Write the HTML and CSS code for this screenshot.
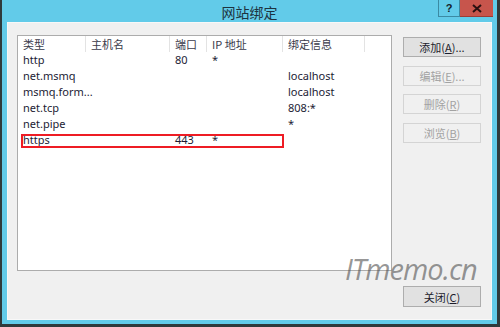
FILE: index.html
```html
<!DOCTYPE html>
<html lang="zh-CN">
<head>
  <meta charset="UTF-8">
  <title>网站绑定</title>
  <link rel="stylesheet" href="styles.css">
</head>
<body>
  <div class="window">
    <div class="titlebar">
      <span class="title">网站绑定</span>
      <div class="caption-buttons">
        <span class="cap cap--help">?</span>
        <span class="cap cap--close">
          <svg width="10" height="9" viewBox="0 0 10 9"><path d="M1 1 L9 8 M9 1 L1 8" stroke="#2a1010" stroke-width="2"/></svg>
        </span>
      </div>
    </div>

    <div class="client">
      <div class="main">
        <div class="list">
          <div class="row row--head">
            <span>类型</span><span>主机名</span><span>端口</span><span>IP 地址</span><span>绑定信息</span><span></span>
          </div>
          <div class="row"><span>http</span><span></span><span>80</span><span>*</span><span></span><span></span></div>
          <div class="row"><span>net.msmq</span><span></span><span></span><span></span><span>localhost</span><span></span></div>
          <div class="row"><span>msmq.form...</span><span></span><span></span><span></span><span>localhost</span><span></span></div>
          <div class="row"><span>net.tcp</span><span></span><span></span><span></span><span>808:*</span><span></span></div>
          <div class="row"><span>net.pipe</span><span></span><span></span><span></span><span>*</span><span></span></div>
          <div class="row"><span>https</span><span></span><span>443</span><span>*</span><span></span><span></span></div>
          <div class="mark"></div>
        </div>

        <div class="actions">
          <button class="btn">添加(<u>A</u>)...</button>
          <button class="btn" disabled>编辑(<u>E</u>)...</button>
          <button class="btn" disabled>删除(<u>R</u>)</button>
          <button class="btn" disabled>浏览(<u>B</u>)</button>
        </div>
      </div>

      <div class="footer">
        <button class="btn">关闭(<u>C</u>)</button>
      </div>

      <div class="watermark">ITmemo.cn</div>
    </div>
  </div>
</body>
</html>
```

FILE: styles.css
```css
* {
  box-sizing: border-box;
  margin: 0;
  padding: 0;
}

body {
  width: 500px;
  height: 327px;
  background: #2f3a3c;
  font-family: "Noto Sans", "Noto Sans CJK SC", sans-serif;
  font-size: 11px;
  color: #1c1c34;
  overflow: hidden;
}

.window {
  margin-left: 2px;
  width: 495px;
  height: 324px;
  background: #62cbe9;
  padding: 0 5px 4px 5px;
  display: flex;
  flex-direction: column;
}

/* Title bar */

.titlebar {
  height: 22px;
  position: relative;
  display: flex;
  justify-content: center;
  align-items: center;
}
.title {
  font-family: "Noto Sans CJK SC", sans-serif;
  font-size: 14px;
  color: #1d3340;
  padding-top: 2px;
}
.caption-buttons {
  position: absolute;
  top: 0;
  right: -1px;
  display: flex;
}
.cap {
  height: 17px;
  display: flex;
  align-items: center;
  justify-content: center;
}
.cap--help {
  width: 22px;
  border: 1px solid #3b8aa3;
  border-top: none;
  font-family: "Liberation Sans", sans-serif;
  font-weight: bold;
  font-size: 11px;
  color: #14212a;
}
.cap--close {
  width: 33px;
  background: #c7554c;
  border-bottom: 1px solid #9c3b34;
}

/* Client area */

.client {
  flex: 1;
  background: #f0f0f0;
  border: 1px solid #f8f8f8;
  padding: 12px 10px 0 9px;
  position: relative;
}
.main {
  display: flex;
  gap: 11px;
}

/* List view */

.list {
  width: 375px;
  height: 236px;
  background: #fff;
  border: 1px solid #acacac;
  position: relative;
}
.row {
  display: grid;
  grid-template-columns: 68px 84px 37px 76px 82px 1fr;
  height: 16px;
  line-height: 16px;
  white-space: nowrap;
}
.row span {
  padding-left: 5px;
  overflow: visible;
}
.row--head {
  font-family: "Noto Sans CJK SC", sans-serif;
  font-size: 11px;
  color: #3a3a4a;
}
.row--head span {
  border-right: 1px solid #e3e3e3;
}
.row--head span:last-child {
  border-right: none;
}
.mark {
  position: absolute;
  left: 3px;
  top: 98px;
  width: 263px;
  height: 14px;
  border: 2px solid #ee1c24;
}

/* Buttons */

.actions {
  display: flex;
  flex-direction: column;
  gap: 8.5px;
  padding-top: 2px;
}
.btn {
  width: 78px;
  height: 20px;
  font-family: "Noto Sans CJK SC", sans-serif;
  font-size: 11px;
  color: #1c1c2c;
  background: #e1e1e1;
  border: 1px solid #adadad;
}
.btn u {
  text-underline-offset: 1px;
}
.btn:disabled {
  color: #a2a2a2;
  background: #f0f0f0;
  border-color: #d4d4d4;
}
.footer {
  display: flex;
  justify-content: flex-end;
  margin-top: 15px;
}
.footer .btn {
  height: 21px;
}

.watermark {
  position: absolute;
  left: 337px;
  top: 226px;
  font-family: "Open Sans", sans-serif;
  font-style: italic;
  font-size: 29px;
  letter-spacing: -1px;
  color: rgba(80, 80, 80, 0.6);
}
```
